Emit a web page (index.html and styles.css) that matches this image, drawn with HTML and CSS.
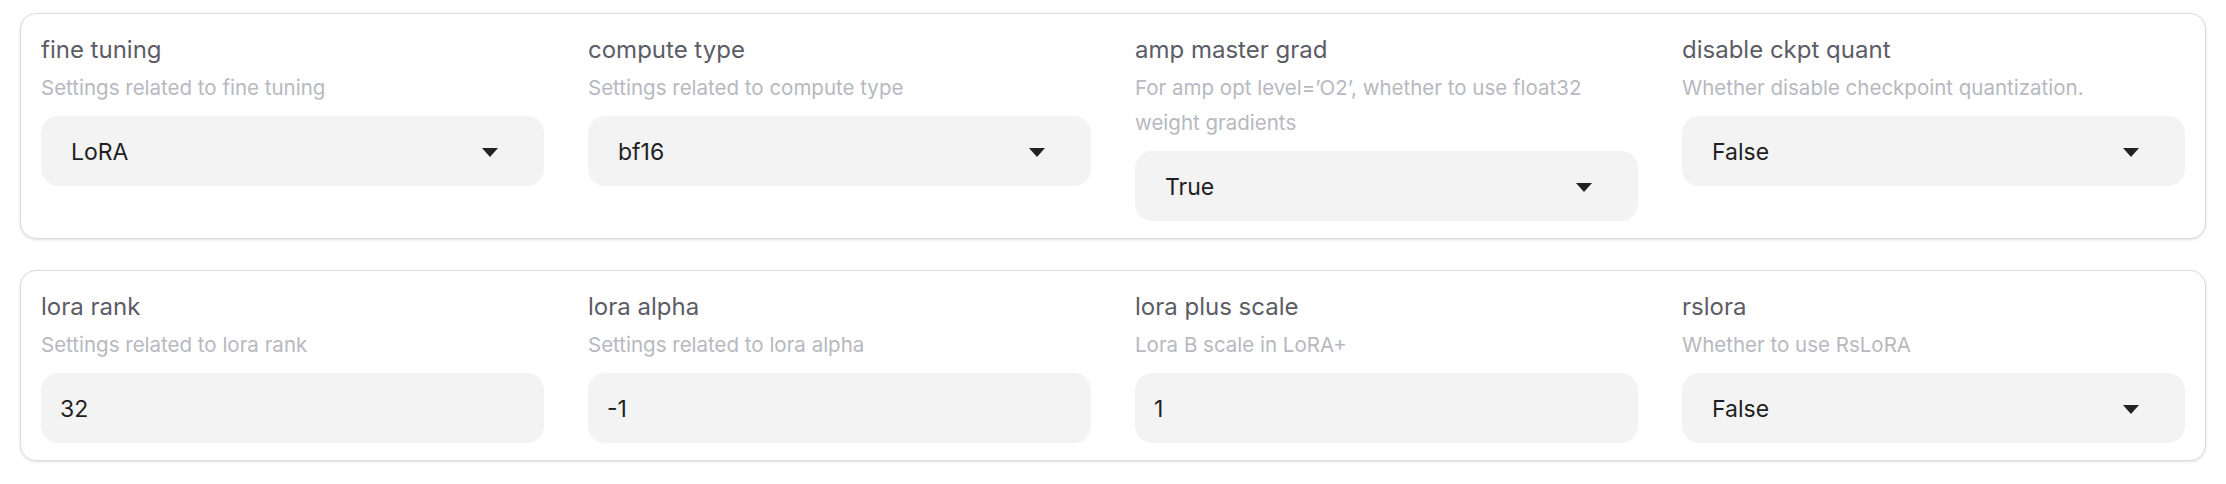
FILE: index.html
```html
<!DOCTYPE html>
<html lang="en">
<head>
<meta charset="utf-8">
<title>Settings</title>
<link rel="stylesheet" href="styles.css">
</head>
<body>
<div class="page">
  <section class="card">
    <div class="field">
      <div class="label">fine tuning</div>
      <div class="desc">Settings related to fine tuning</div>
      <div class="control select"><span class="value">LoRA</span><span class="caret"></span></div>
    </div>
    <div class="field">
      <div class="label">compute type</div>
      <div class="desc">Settings related to compute type</div>
      <div class="control select"><span class="value">bf16</span><span class="caret"></span></div>
    </div>
    <div class="field">
      <div class="label">amp master grad</div>
      <div class="desc">For amp opt level=’O2’, whether to use float32<br>weight gradients</div>
      <div class="control select"><span class="value">True</span><span class="caret"></span></div>
    </div>
    <div class="field">
      <div class="label">disable ckpt quant</div>
      <div class="desc">Whether disable checkpoint quantization.</div>
      <div class="control select"><span class="value">False</span><span class="caret"></span></div>
    </div>
  </section>
  <section class="card">
    <div class="field">
      <div class="label">lora rank</div>
      <div class="desc">Settings related to lora rank</div>
      <div class="control input"><span class="value">32</span></div>
    </div>
    <div class="field">
      <div class="label">lora alpha</div>
      <div class="desc">Settings related to lora alpha</div>
      <div class="control input"><span class="value">-1</span></div>
    </div>
    <div class="field">
      <div class="label">lora plus scale</div>
      <div class="desc">Lora B scale in LoRA+</div>
      <div class="control input"><span class="value">1</span></div>
    </div>
    <div class="field">
      <div class="label">rslora</div>
      <div class="desc">Whether to use RsLoRA</div>
      <div class="control select"><span class="value">False</span><span class="caret"></span></div>
    </div>
  </section>
</div>
</body>
</html>
```
FILE: styles.css
```css
html, body {
  margin: 0;
  padding: 0;
  background: #ffffff;
}
body {
  font-family: Inter, "Liberation Sans", sans-serif;
}
.page {
  display: flex;
  flex-direction: column;
  gap: 31px;
  padding: 13px 20px;
}
.card {
  display: grid;
  grid-template-columns: repeat(4, 1fr);
  column-gap: 44px;
  align-items: start;
  padding: 21px 20px 17px;
  border: 1px solid #dcdcdf;
  border-radius: 16px;
  box-shadow: 0 1px 3px rgba(0, 0, 0, 0.12);
  background: #fff;
}
.field {
  display: flex;
  flex-direction: column;
  min-width: 0;
}
.label {
  font-size: 24px;
  line-height: 30px;
  color: #5c5c66;
}
.desc {
  margin-top: 5px;
  font-size: 20.5px;
  line-height: 35px;
  color: #b8b8c0;
  white-space: nowrap;
}
.control {
  margin-top: 11px;
  height: 70px;
  border-radius: 17px;
  background: #f3f3f3;
  display: flex;
  align-items: center;
  box-sizing: border-box;
}
.select {
  padding: 2px 46px 0 30px;
  justify-content: space-between;
}
.input {
  padding: 2px 18px 0 19px;
}
.value {
  font-size: 23px;
  color: #1f1f22;
}
.caret {
  width: 0;
  height: 0;
  border-left: 8px solid transparent;
  border-right: 8px solid transparent;
  border-top: 9px solid #222;
}
```
